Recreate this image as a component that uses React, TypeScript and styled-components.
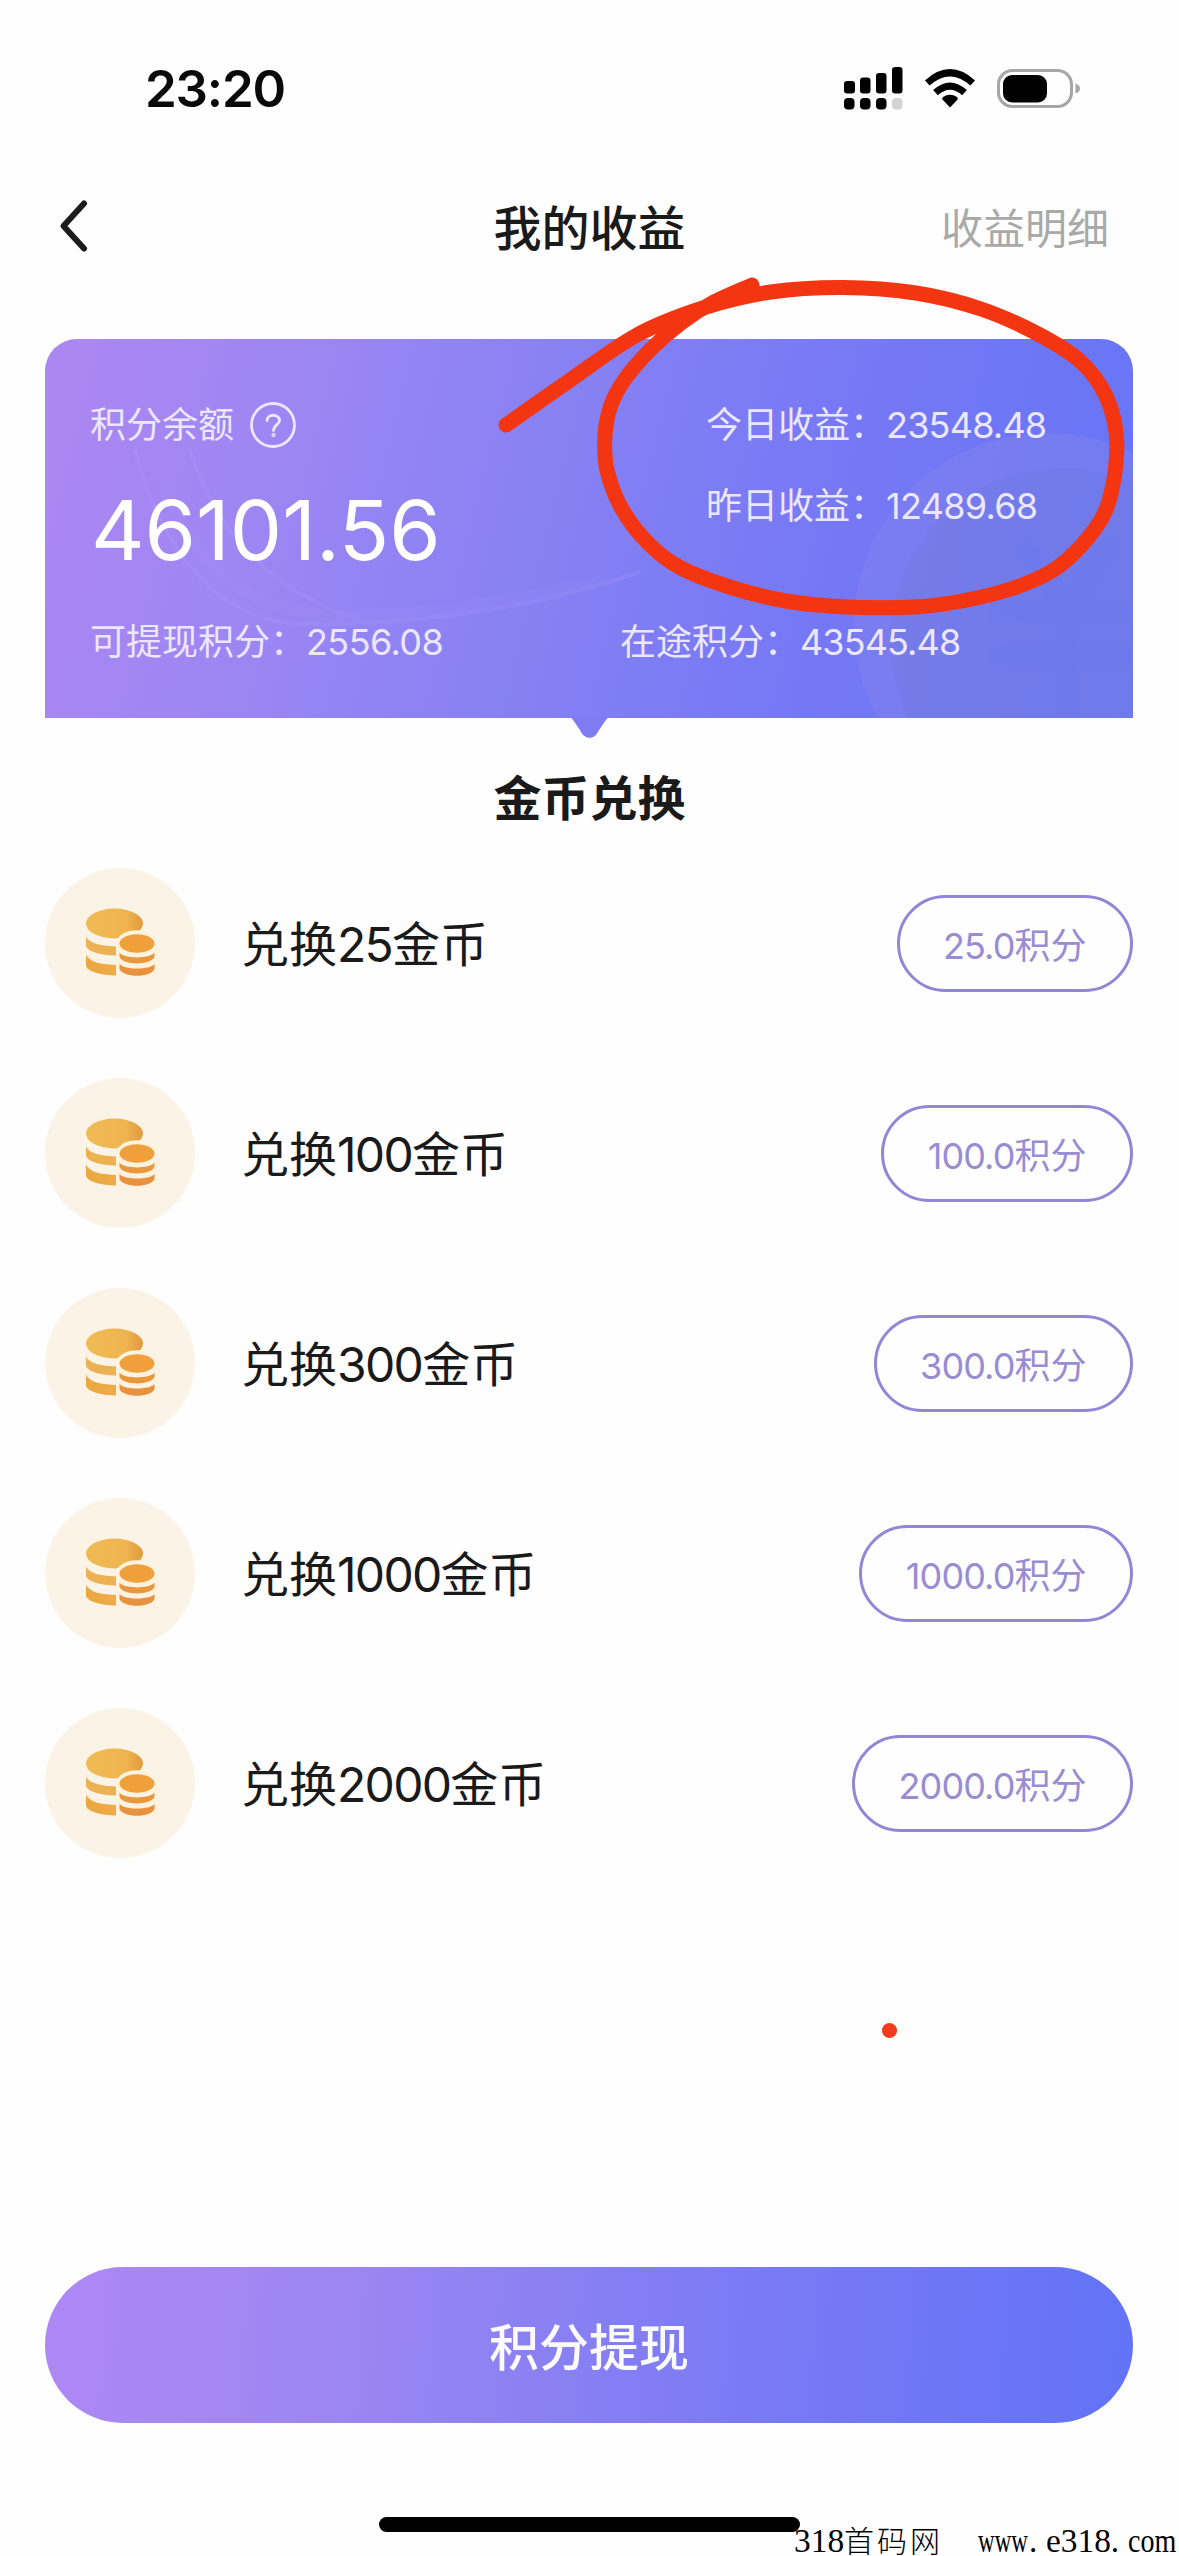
import React from "react";
import styled, { createGlobalStyle } from "styled-components";

const GlobalStyle = createGlobalStyle`
  * { box-sizing: border-box; }
  body { margin: 0; background: #fefefe; }
`;

const Screen = styled.div`
  position: relative;
  width: 1179px;
  height: 2556px;
  overflow: hidden;
  display: flex;
  flex-direction: column;
  background: #fefefe;
  color: #1a1a1a;
  font-family: Inter, "Noto Sans CJK SC", sans-serif;
`;

const StatusBar = styled.div`
  height: 176px;
  flex: none;
  display: flex;
  align-items: center;
  justify-content: space-between;
  padding: 0 98px 0 145px;
`;

const Clock = styled.div`
  font-size: 51px;
  font-weight: 600;
  letter-spacing: -1.2px;
  color: #0a0a0a;
`;

const NavBar = styled.div`
  height: 102px;
  flex: none;
  display: grid;
  grid-template-columns: 1fr auto 1fr;
  align-items: center;
  padding: 0 70px;
`;

const BackButton = styled.div`
  display: flex;
  margin-left: -16px;
`;

const NavTitle = styled.h1`
  margin: 0;
  padding-top: 4px;
  font-size: 48px;
  font-weight: 500;
  line-height: 72px;
`;

const NavLink = styled.div`
  justify-self: end;
  padding-top: 4px;
  font-size: 42px;
  line-height: 60px;
  font-weight: 400;
  color: #a9a9a9;
`;

const Card = styled.section`
  position: relative;
  flex: none;
  margin: 61px 46px 0 45px;
  height: 379px;
  padding: 0 45px;
  border-radius: 32px 32px 0 0;
  background: linear-gradient(104deg, #ad87f1 0%, #9d86f3 22%, #8681f3 47%, #7678f5 70%, #6575f6 100%);
  color: #ece7fe;
  font-size: 36px;
  line-height: 54px;
`;

const CardArt = styled.svg`
  position: absolute;
  left: 0;
  top: 0;
`;

const CardBody = styled.div`
  position: relative;
  display: grid;
  grid-template-columns: 616px 1fr;
`;

const Balance = styled.div`
  padding-top: 59px;
`;

const BalanceLabel = styled.div`
  display: flex;
  align-items: center;
  gap: 15px;
`;

const BalanceValue = styled.div`
  margin: 17px 0 10px 1px;
  height: 124px;
  line-height: 122px;
  font-size: 83px;
  color: #ffffff;
`;

const Earnings = styled.div`
  padding-top: 59px;
  display: flex;
  flex-direction: column;
  gap: 27px;
`;

const CardFooter = styled.div`
  position: relative;
  display: grid;
  grid-template-columns: 530px 1fr;
  margin-top: 12px;
`;

const Stat = styled.div`
  display: flex;
  white-space: nowrap;
`;

const Num = styled.span<{ $tight: number }>`
  letter-spacing: -${(p) => p.$tight}px;
`;

const SectionTitle = styled.h2`
  flex: none;
  margin: 45px 0 0;
  text-align: center;
  font-size: 48px;
  line-height: 72px;
  font-weight: 700;
`;

const List = styled.ul`
  flex: none;
  list-style: none;
  margin: 3px 46px 0 45px;
  padding: 0;
`;

const Row = styled.li`
  height: 210px;
  display: flex;
  align-items: center;
`;

const RowLabel = styled.span`
  flex: 1;
  margin-left: 46px;
  padding-top: 4px;
  font-size: 48px;
  line-height: 72px;
`;

const PriceButton = styled.button`
  height: 97px;
  padding: 0 43.5px 1px;
  border: 3.5px solid #9286d6;
  border-radius: 49px;
  background: transparent;
  color: #988dd3;
  font-family: inherit;
  font-size: 36px;
`;

const WithdrawButton = styled.button`
  flex: none;
  margin: 379px 46px 0 45px;
  height: 156px;
  padding: 0 0 3px;
  border: 0;
  border-radius: 78px;
  background: linear-gradient(94deg, #ae88f4 0%, #9d86f2 27%, #8980f3 47%, #7879f5 68%, #6273f6 100%);
  color: #fbfaff;
  font-family: inherit;
  font-size: 50px;
  font-weight: 500;
`;

const HomeIndicator = styled.div`
  flex: none;
  width: 421px;
  height: 15px;
  margin: 94px 0 0 379px;
  border-radius: 8px;
  background: #000;
`;

const Annotation = styled.svg`
  position: absolute;
  left: 0;
  top: 0;
  pointer-events: none;
`;

const Watermark = styled.div`
  position: absolute;
  left: 794px;
  top: 2522px;
  display: flex;
  align-items: baseline;
  color: #000;
  font-family: "Liberation Serif", serif;
  font-size: 33.4px;
  line-height: 34px;
`;

const SiteName = styled.span`
  margin: 0 35px 0 0;
  font-family: "Noto Sans CJK SC", sans-serif;
  font-size: 30px;
  font-weight: 300;
  letter-spacing: 3px;
`;

const Squeezed = styled.span<{ $scale: number; $trim: number }>`
  margin-right: -${(p) => p.$trim}px;
  transform: scaleX(${(p) => p.$scale});
  transform-origin: left center;
`;

const Dot = styled.span`
  width: 17px;
`;

const StatusIcons = () => (
  <svg width="238" height="44" viewBox="844 65 238 44">
    <g fill="#000">
      <rect x="845" y="80" width="11" height="12.5" rx="3.200" />
      <rect x="861" y="76.500" width="10.500" height="16" rx="3.200" />
      <rect x="877" y="72" width="10.500" height="20.500" rx="3.200" />
      <rect x="893" y="66" width="10.500" height="26.500" rx="3.200" />
      <rect x="845" y="97" width="10.500" height="11.500" rx="4" />
      <rect x="861" y="97" width="10.500" height="11.500" rx="4" />
      <rect x="877" y="97" width="10.500" height="11.500" rx="4" />
      <rect x="893" y="97" width="10.500" height="11.500" rx="4" fill="#d3d3d3" />
      <path d="M951 106.500 L943.500 98.500 Q942.800 97 944 96 Q951 91.500 958 96 Q959.200 97 958.500 98.500Z" />
    </g>
    <g fill="none" stroke="#000" strokeWidth="7">
      <path d="M928.300 82 Q951 61.500 973.700 82" />
      <path d="M936.500 91.700 Q951 78.500 965.500 91.700" />
    </g>
    <rect x="999.500" y="69.500" width="73" height="36" rx="14" fill="none" stroke="#a6a6a6" strokeWidth="3" />
    <rect x="1004" y="74" width="44" height="27.500" rx="9" fill="#000" />
    <path d="M1076.500 82.500 Q1081 84 1081 87.500 Q1081 91 1076.500 92.500Z" fill="#a6a6a6" />
  </svg>
);

const BackIcon = () => (
  <svg width="40" height="56" viewBox="0 0 40 56" fill="none" stroke="#1c1c1c" strokeWidth="6" strokeLinecap="round" strokeLinejoin="round">
    <path d="M30 4.500 L9.500 27 L30 49.500" />
  </svg>
);

const HelpIcon = () => (
  <svg width="48" height="48" viewBox="0 0 48 48" fill="none" stroke="#ece7fe" strokeWidth="2.800" strokeLinecap="round">
    <circle cx="24" cy="24" r="21.500" />
    <path d="M18 19.500 C18 12.500 30.500 12.500 30.500 19.500 C30.500 24 24.500 24 24.500 29.500" />
    <circle cx="24.500" cy="34" r="0.700" />
  </svg>
);

const CoinsIcon = () => (
  <svg width="150" height="150" viewBox="5 8 150 150">
    <defs>
      <linearGradient id="coinTop" x1="0" x2="1">
        <stop offset="0" stopColor="#efbb55" />
        <stop offset="0.7" stopColor="#efb450" />
        <stop offset="1" stopColor="#e09a3c" />
      </linearGradient>
      <linearGradient id="coinSide" x1="0" x2="1">
        <stop offset="0" stopColor="#e9a840" />
        <stop offset="1" stopColor="#efab48" />
      </linearGradient>
    </defs>
    <circle cx="80" cy="83" r="75" fill="#faf3e6" />
    <ellipse cx="74.500" cy="63.500" rx="28.500" ry="15" fill="url(#coinTop)" />
    <path d="M46 76.500 C49 83 60 86.500 79 86.500 V95.500 C62 96 46 91.500 46 85Z" fill="#ecb152" />
    <path d="M46 94.500 C49 101.500 60 105 79 105 V115.500 C62 116 46 111.500 46 105Z" fill="url(#coinSide)" />
    <path d="M76 84 C77 65.500 117 65.500 118 84 V118 H76Z" fill="#fcf2e0" />
    <ellipse cx="97" cy="83.500" rx="17.500" ry="9.300" fill="#efa03a" />
    <path d="M79.500 92.500 C84 99 110 99 114.500 92.500 V97 C111 105.500 83 105.500 79.500 97Z" fill="#e9973c" />
    <path d="M79.500 104 C84 110 110 110 114.500 104 V109 C111 118 83 118 79.500 109Z" fill="#e8913f" />
  </svg>
);

const CardDecoration = () => (
  <CardArt width="1088" height="402" viewBox="45 339 1088 402">
    <defs>
      <clipPath id="cardClip">
        <rect x="45" y="339" width="1088" height="379" />
      </clipPath>
    </defs>
    <path d="M571 717.500 H608 Q604 722 596 735 Q590 741 583 735 Q575 722 571 717.500Z" fill="#7f7cf3" />
    <g clipPath="url(#cardClip)">
      <circle cx="1047" cy="626" r="193" fill="#8787e8" opacity="0.36" />
      <circle cx="1062" cy="640" r="172" fill="#6b78d2" opacity="0.22" />
      <g fill="none" stroke="#6a78f0" strokeWidth="22" opacity="0.28">
        <path d="M1020 540 L1066 612 L1112 540" />
        <path d="M990 612 H1133 M990 656 H1133 M1066 612 V718" />
      </g>
      <g fill="none" stroke="#b9a6ff" opacity="0.16">
        <path d="M135 450 C165 560 225 630 320 624 C430 624 540 606 640 572" strokeWidth="4" />
        <path d="M190 450 C225 560 300 600 355 618" strokeWidth="4" />
        <path d="M160 480 C205 580 245 605 330 616 C430 616 520 600 605 580" strokeWidth="12" opacity="0.5" />
      </g>
    </g>
  </CardArt>
);

type Point = [number, number];

const penStroke: Point[] = [
  [506, 425], [566, 383], [637, 335], [706, 307], [771, 292], [843, 287.5], [916, 293], [981, 309],
  [1038, 334], [1080, 361], [1105, 394], [1116, 432], [1115, 472], [1105, 512], [1082, 545], [1052, 571],
  [1012, 588.5], [962, 601], [915, 607], [847, 607], [786, 601], [733, 588], [681, 568], [649, 544],
  [622, 509], [607, 470], [605, 435], [611, 405], [625, 379], [651, 349], [681, 323], [712, 303], [752, 285],
];

// Catmull-Rom spline through the pen samples, written as cubic segments.
const toSmoothPath = (pts: Point[]) =>
  pts.slice(1).reduce((d, p, i) => {
    const a = pts[Math.max(i - 1, 0)];
    const b = pts[i];
    const c = pts[Math.min(i + 2, pts.length - 1)];
    const c1 = [b[0] + (p[0] - a[0]) / 6, b[1] + (p[1] - a[1]) / 6];
    const c2 = [p[0] - (c[0] - b[0]) / 6, p[1] - (c[1] - b[1]) / 6];
    return `${d} C${c1.join(" ")} ${c2.join(" ")} ${p.join(" ")}`;
  }, `M${pts[0].join(" ")}`);

const offers = [
  { coins: 25, price: "25.0" },
  { coins: 100, price: "100.0" },
  { coins: 300, price: "300.0" },
  { coins: 1000, price: "1000.0" },
  { coins: 2000, price: "2000.0" },
];

export default function App() {
  return (
    <Screen>
      <GlobalStyle />
      <StatusBar>
        <Clock>23:20</Clock>
        <StatusIcons />
      </StatusBar>
      <NavBar>
        <BackButton>
          <BackIcon />
        </BackButton>
        <NavTitle>我的收益</NavTitle>
        <NavLink>收益明细</NavLink>
      </NavBar>
      <Card>
        <CardDecoration />
        <CardBody>
          <Balance>
            <BalanceLabel>
              积分余额
              <HelpIcon />
            </BalanceLabel>
            <BalanceValue>46101.56</BalanceValue>
          </Balance>
          <Earnings>
            <Stat>今日收益：<Num $tight={0.8}>23548.48</Num></Stat>
            <Stat>昨日收益：<Num $tight={0.7}>12489.68</Num></Stat>
          </Earnings>
        </CardBody>
        <CardFooter>
          <Stat>可提现积分：<Num $tight={0.6}>2556.08</Num></Stat>
          <Stat>在途积分：<Num $tight={0.9}>43545.48</Num></Stat>
        </CardFooter>
      </Card>
      <SectionTitle>金币兑换</SectionTitle>
      <List>
        {offers.map((o) => (
          <Row key={o.coins}>
            <CoinsIcon />
            <RowLabel>
              兑换<Num $tight={1.7}>{o.coins}</Num>金币
            </RowLabel>
            <PriceButton>
              <Num $tight={0.9}>{o.price}</Num>积分
            </PriceButton>
          </Row>
        ))}
      </List>
      <WithdrawButton>积分提现</WithdrawButton>
      <HomeIndicator />
      <Annotation width="1179" height="2100" viewBox="0 0 1179 2100">
        <path
          d={toSmoothPath(penStroke)}
          fill="none"
          stroke="#f33611"
          strokeWidth="15"
          strokeLinecap="round"
          strokeLinejoin="round"
        />
        <circle cx="889.500" cy="2030.500" r="7.500" fill="#f33a1c" />
      </Annotation>
      <Watermark>
        <span>318</span>
        <SiteName>首码网</SiteName>
        <Squeezed $scale={0.69} $trim={21.5}>www</Squeezed>
        <Dot>.</Dot>
        <Squeezed $scale={1} $trim={0}>e318</Squeezed>
        <Dot>.</Dot>
        <Squeezed $scale={0.84} $trim={9}>com</Squeezed>
      </Watermark>
    </Screen>
  );
}
